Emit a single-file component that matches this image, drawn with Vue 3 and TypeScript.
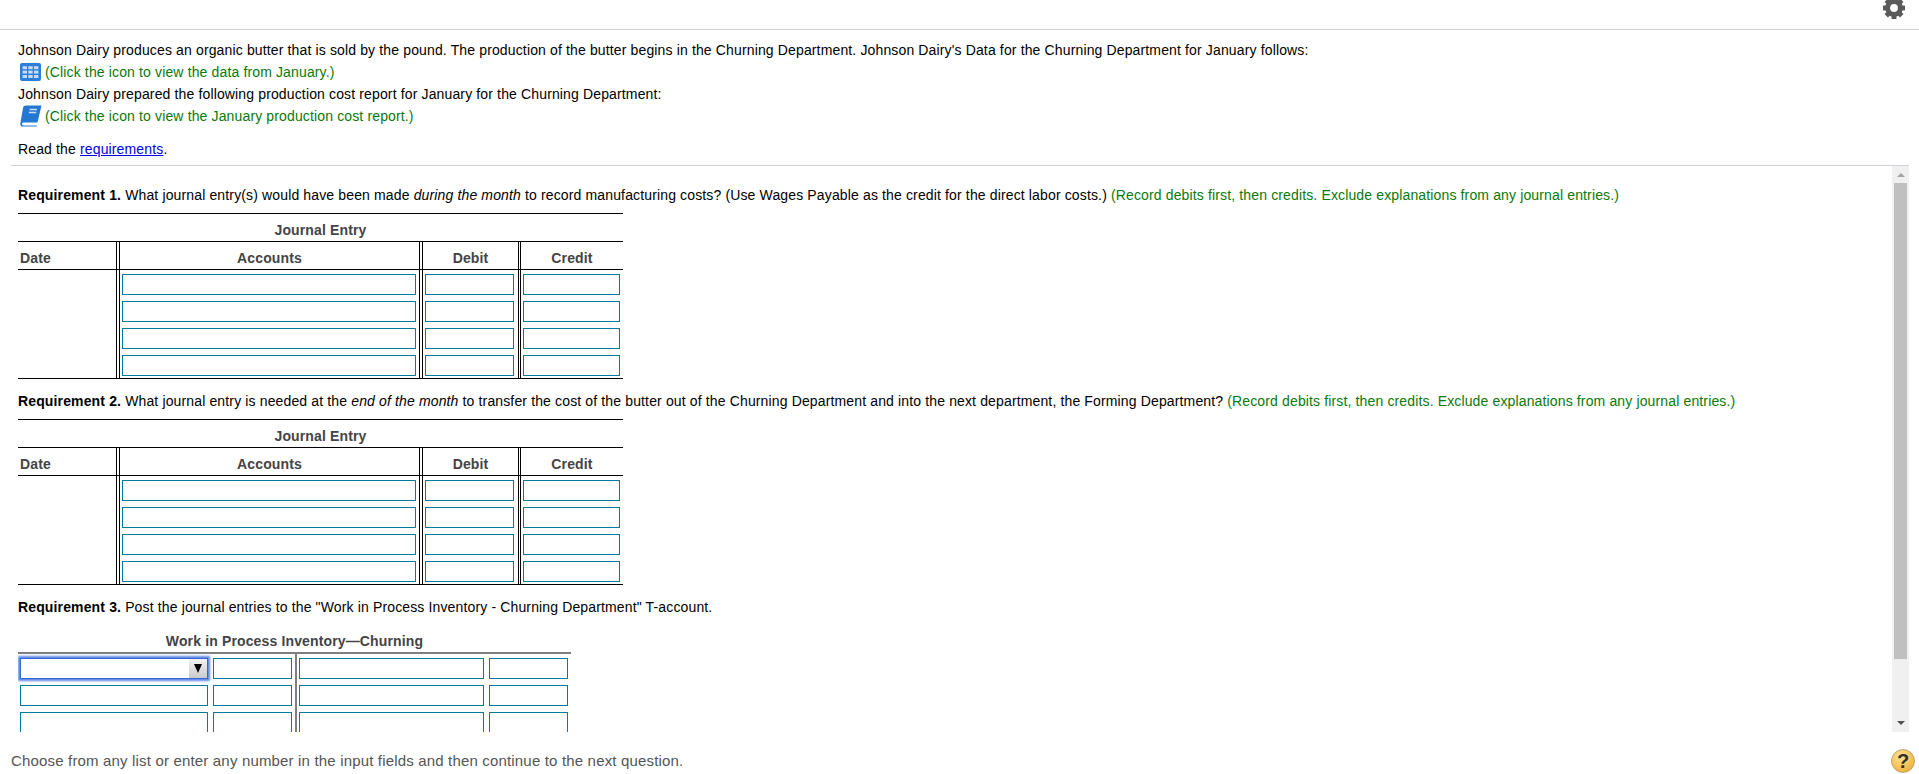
<script setup lang="ts">
const rows = [0, 1, 2, 3]
const tRows = [0, 1, 2]
const gearTeeth = [0, 45, 90, 135, 180, 225, 270, 315]
</script>

<template>
  <div class="page">
    <header class="topbar">
      <svg class="gear" viewBox="0 0 24 24" width="24" height="24" aria-hidden="true">
        <rect v-for="a in gearTeeth" :key="a" x="9.6" y="1" width="4.8" height="5" fill="#5a5a5a" :transform="`rotate(${a} 12 12)`" />
        <circle cx="12" cy="12" r="6.4" fill="none" stroke="#5a5a5a" stroke-width="5" />
      </svg>
    </header>

    <section class="intro">
      <p class="line">Johnson Dairy produces an organic butter that is sold by the pound. The production of the butter begins in the Churning Department. Johnson Dairy's Data for the Churning Department for January follows:</p>
      <p class="line green">
        <svg class="ico grid" viewBox="0 0 21 18" width="21" height="18" aria-hidden="true">
          <rect x="0" y="0" width="21" height="18" rx="2" fill="#2f7dd8" />
          <g fill="#c4dcf6">
            <rect x="2.6" y="3.2" width="4.4" height="3" /><rect x="8.3" y="3.2" width="4.4" height="3" /><rect x="14" y="3.2" width="4.4" height="3" />
            <rect x="2.6" y="7.6" width="4.4" height="3" /><rect x="8.3" y="7.6" width="4.4" height="3" /><rect x="14" y="7.6" width="4.4" height="3" />
            <rect x="2.6" y="12" width="4.4" height="3" /><rect x="8.3" y="12" width="4.4" height="3" /><rect x="14" y="12" width="4.4" height="3" />
          </g>
        </svg>(Click the icon to view the data from January.)
      </p>
      <p class="line">Johnson Dairy prepared the following production cost report for January for the Churning Department:</p>
      <p class="line green">
        <svg class="ico book" viewBox="0 0 22 22" width="22" height="22" aria-hidden="true">
          <path d="M6 0.5H21.5L17.5 17.5H3.5C2.5 17.5 2 18.2 2 19s.6 1.4 1.6 1.4H17L16.6 21.5H3C1 21.5 0 20.4 .3 18.4L3 3C3.3 1.3 4.4 .5 6 .5Z" fill="#2577d4" />
          <path d="M9.5 4.5h7.5M8.8 7.5h7.5" stroke="#c7def6" stroke-width="1.3" />
        </svg>(Click the icon to view the January production cost report.)
      </p>
      <p class="line read">Read the <a class="link" href="#">requirements</a>.</p>
    </section>

    <div class="middle">
      <main class="scroll">
        <p class="req"><b>Requirement 1.</b> What journal entry(s) would have been made <i>during the month</i> to record manufacturing costs? (Use Wages Payable as the credit for the direct labor costs.) <span class="hint">(Record debits first, then credits. Exclude explanations from any journal entries.)</span></p>
        <div class="journal">
          <div class="jtitle">Journal Entry</div>
          <div class="jrow jhead">
            <div class="c date left">Date</div>
            <div class="c acc">Accounts</div>
            <div class="c deb">Debit</div>
            <div class="c cre">Credit</div>
          </div>
          <div class="jrow jbody">
            <div class="c date"></div>
            <div class="c acc stack"><span v-for="r in rows" :key="r" class="inp"></span></div>
            <div class="c deb stack"><span v-for="r in rows" :key="r" class="inp"></span></div>
            <div class="c cre stack"><span v-for="r in rows" :key="r" class="inp"></span></div>
          </div>
        </div>

        <p class="req r2"><b>Requirement 2.</b> What journal entry is needed at the <i>end of the month</i> to transfer the cost of the butter out of the Churning Department and into the next department, the Forming Department? <span class="hint">(Record debits first, then credits. Exclude explanations from any journal entries.)</span></p>
        <div class="journal">
          <div class="jtitle">Journal Entry</div>
          <div class="jrow jhead">
            <div class="c date left">Date</div>
            <div class="c acc">Accounts</div>
            <div class="c deb">Debit</div>
            <div class="c cre">Credit</div>
          </div>
          <div class="jrow jbody">
            <div class="c date"></div>
            <div class="c acc stack"><span v-for="r in rows" :key="r" class="inp"></span></div>
            <div class="c deb stack"><span v-for="r in rows" :key="r" class="inp"></span></div>
            <div class="c cre stack"><span v-for="r in rows" :key="r" class="inp"></span></div>
          </div>
        </div>

        <p class="req r3"><b>Requirement 3.</b> Post the journal entries to the "Work in Process Inventory - Churning Department" T-account.</p>
        <div class="taccount">
          <div class="ttitle">Work in Process Inventory—Churning</div>
          <div class="tbody">
            <div class="tside tl">
              <div v-for="r in tRows" :key="r" class="trow">
                <span v-if="r === 0" class="select"><span class="arrow"><span class="tri"></span></span></span>
                <span v-else class="inp t1"></span>
                <span class="inp t2"></span>
              </div>
            </div>
            <div class="tside tr">
              <div v-for="r in tRows" :key="r" class="trow">
                <span class="inp t3"></span>
                <span class="inp t4"></span>
              </div>
            </div>
          </div>
        </div>
      </main>
      <aside class="scrollbar">
        <span class="up"></span>
        <span class="thumb"></span>
        <span class="down"></span>
      </aside>
    </div>

    <footer class="footer">
      <span class="note">Choose from any list or enter any number in the input fields and then continue to the next question.</span>
      <span class="help">?</span>
    </footer>
  </div>
</template>

<style>
html, body { margin: 0; background: #fff; overflow: hidden; }
</style>

<style scoped>
.page { width: 1919px; height: 774px; overflow: hidden; display: flex; flex-direction: column; font-family: "Liberation Sans", Arial, sans-serif; font-size: 14px; letter-spacing: 0.14px; color: #000; }
.topbar { height: 29px; flex: none; border-bottom: 1px solid #d1d1dc; display: flex; justify-content: flex-end; padding-right: 13px; overflow: hidden; }
.gear { margin-top: -4px; }
.intro { height: 136px; flex: none; box-sizing: border-box; padding: 9px 0 0 7px; margin: 0 10px 0 11px; border-bottom: 1px solid #d1d1dc; }
.line { margin: 0; height: 22px; line-height: 22px; white-space: nowrap; display: flex; align-items: center; }
.green { color: #0a7a0a; }
.read { margin-top: 11px; display: block; }
.link { color: #0000ee; text-decoration: underline; }
.ico { flex: none; margin-left: 2px; }
.grid { margin-right: 4px; }
.book { margin-right: 3px; }
.middle { display: flex; height: 566px; flex: none; margin-right: 10px; }
.scroll { flex: 1; min-width: 0; overflow: hidden; padding-left: 18px; }
.req { margin: 21px 0 0; line-height: 16px; white-space: nowrap; }
.req.r2, .req.r3 { margin-top: 14px; }
.hint { color: #0a7a0a; }
.journal { width: 605px; margin-top: 10px; border-top: 1px solid #000; color: #444; font-weight: 700; }
.jtitle { height: 27px; line-height: 33px; text-align: center; border-bottom: 1px solid #000; }
.jrow { display: flex; }
.jhead { height: 27px; border-bottom: 1px solid #000; }
.jbody { height: 108px; border-bottom: 1px solid #000; }
.c { box-sizing: border-box; text-align: center; line-height: 33px; }
.date { width: 99px; border-right: 1px solid #000; }
.date.left { text-align: left; padding-left: 2px; }
.acc { width: 301px; margin-left: 2px; border-left: 1px solid #000; border-right: 1px solid #000; }
.deb { width: 97px; margin-left: 2px; border-left: 1px solid #000; border-right: 1px solid #000; }
.cre { width: 103px; margin-left: 1px; border-left: 1px solid #000; }
.stack { display: flex; flex-direction: column; gap: 6px; padding-top: 4px; }
.inp { display: block; box-sizing: border-box; height: 21px; border: 1px solid #007a99; background: #fff; }
.acc .inp { margin: 0 3px 0 2px; }
.deb .inp { margin: 0 4px 0 2px; }
.cre .inp { margin: 0 3px 0 2px; }
.taccount { width: 553px; margin-top: 13px; color: #444; font-weight: 700; }
.ttitle { text-align: center; height: 24px; line-height: 26px; }
.tbody { display: flex; border-top: 2px solid #7f7f7f; height: 78px; overflow: hidden; }
.tside { display: flex; flex-direction: column; gap: 6px; padding-top: 4px; box-sizing: border-box; }
.tl { width: 279px; border-right: 2px solid #7f7f7f; padding-left: 2px; }
.tr { padding-left: 2px; }
.trow { display: flex; flex: none; }
.t1 { width: 188px; margin-right: 5px; }
.t2 { width: 79px; }
.t3 { width: 185px; margin-right: 5px; }
.t4 { width: 79px; }
.select { width: 188px; height: 21px; margin-right: 5px; box-sizing: border-box; border: 1px solid #3566d6; box-shadow: 0 0 2px 2px #5f86e2; display: flex; justify-content: flex-end; background: #fff; }
.arrow { width: 18px; background: linear-gradient(#f2f2f2, #cbcbcb); display: flex; justify-content: center; padding-top: 5px; box-sizing: border-box; }
.tri { width: 0; height: 0; border-left: 4px solid transparent; border-right: 4px solid transparent; border-top: 9px solid #000; }
.scrollbar { width: 17px; flex: none; background: #f0f0f0; display: flex; flex-direction: column; align-items: center; }
.up { width: 0; height: 0; border: 4px solid transparent; border-top: 0; border-bottom: 4px solid #a3a3a3; margin-top: 7px; }
.thumb { width: 13px; height: 476px; background: #c0c0c0; margin-top: 6px; }
.down { width: 0; height: 0; border: 4px solid transparent; border-bottom: 0; border-top: 4px solid #505050; margin-top: 62px; }
.footer { flex: 1; display: flex; justify-content: space-between; align-items: flex-start; padding: 17px 4px 0 11px; font-size: 15px; letter-spacing: 0.17px; color: #555; }
.note { margin-top: 3px; line-height: 18px; }
.help { width: 24px; height: 24px; border-radius: 50%; background: radial-gradient(circle at 40% 30%, #ffe596, #f0b53e 75%); border: 1px solid #bda77a; box-sizing: border-box; color: #333; font-weight: 700; font-size: 20px; letter-spacing: 0; line-height: 22px; text-align: center; }
</style>
